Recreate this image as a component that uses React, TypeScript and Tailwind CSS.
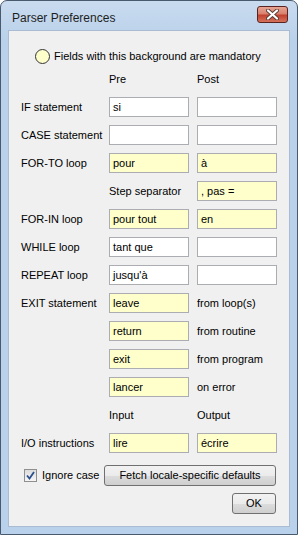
import React from "react";

const font = { fontFamily: '"Liberation Sans", Arial, sans-serif' };

type Cell =
  | { kind: "input"; value: string; mandatory?: boolean }
  | { kind: "text"; value: string }
  | { kind: "empty" };

type Row = { label: string; pre: Cell; post: Cell };

const rows: Row[] = [
  { label: "", pre: { kind: "text", value: "Pre" }, post: { kind: "text", value: "Post" } },
  { label: "IF statement", pre: { kind: "input", value: "si" }, post: { kind: "input", value: "" } },
  { label: "CASE statement", pre: { kind: "input", value: "" }, post: { kind: "input", value: "" } },
  { label: "FOR-TO loop", pre: { kind: "input", value: "pour", mandatory: true }, post: { kind: "input", value: "à", mandatory: true } },
  { label: "", pre: { kind: "text", value: "Step separator" }, post: { kind: "input", value: ", pas =", mandatory: true } },
  { label: "FOR-IN loop", pre: { kind: "input", value: "pour tout", mandatory: true }, post: { kind: "input", value: "en", mandatory: true } },
  { label: "WHILE loop", pre: { kind: "input", value: "tant que" }, post: { kind: "input", value: "" } },
  { label: "REPEAT loop", pre: { kind: "input", value: "jusqu'à" }, post: { kind: "input", value: "" } },
  { label: "EXIT statement", pre: { kind: "input", value: "leave", mandatory: true }, post: { kind: "text", value: "from loop(s)" } },
  { label: "", pre: { kind: "input", value: "return", mandatory: true }, post: { kind: "text", value: "from routine" } },
  { label: "", pre: { kind: "input", value: "exit", mandatory: true }, post: { kind: "text", value: "from program" } },
  { label: "", pre: { kind: "input", value: "lancer", mandatory: true }, post: { kind: "text", value: "on error" } },
  { label: "", pre: { kind: "text", value: "Input" }, post: { kind: "text", value: "Output" } },
  { label: "I/O instructions", pre: { kind: "input", value: "lire", mandatory: true }, post: { kind: "input", value: "écrire", mandatory: true } },
];

function CellView({ cell }: { cell: Cell }) {
  if (cell.kind === "input") {
    return (
      <div
        className={`h-[20px] border border-[#abadb3] flex items-center px-[3px] text-black ${
          cell.mandatory ? "bg-[#ffffcc]" : "bg-white"
        }`}
      >
        {cell.value}
      </div>
    );
  }
  if (cell.kind === "text") {
    return <div className="h-[20px] flex items-center whitespace-nowrap text-black">{cell.value}</div>;
  }
  return <div className="h-[20px]" />;
}

function Button({ children, className }: { children: React.ReactNode; className?: string }) {
  return (
    <div
      className={`h-[21px] rounded-[3px] border border-[#707070] flex items-center justify-center text-black bg-[linear-gradient(#f2f2f2_0%,#ebebeb_50%,#dddddd_51%,#cfcfcf_100%)] ${className ?? ""}`}
    >
      {children}
    </div>
  );
}

export default function App() {
  return (
    <div className="w-[298px] h-[535px] bg-white" style={font}>
      <div className="w-full h-full rounded-t-[7px] border border-[#4a5a6e] bg-[linear-gradient(#c9dbef,#b9d1ea_40px)] flex flex-col px-[7px] pb-[7px]">
        {/* title bar */}
        <div className="h-[29px] flex items-center justify-between pl-[4px] pr-[2px]">
          <span className="text-[12px] text-[#1e1e1e] mt-[5px]">Parser Preferences</span>
          <div className="w-[31px] h-[17px] mt-[-3px] rounded-[3px] border border-[#5a2320] bg-[linear-gradient(#e8a493_0%,#d98270_45%,#c2412f_55%,#d4725c_100%)] flex items-center justify-center">
            <svg width="13" height="11" viewBox="0 0 13 11">
              <path d="M2 1.5 L11 9.5 M11 1.5 L2 9.5" stroke="#5a3a36" strokeWidth="4" strokeLinecap="round" />
              <path d="M2 1.5 L11 9.5 M11 1.5 L2 9.5" stroke="#ffffff" strokeWidth="2.2" strokeLinecap="round" />
            </svg>
          </div>
        </div>
        {/* client */}
        <div className="flex-1 bg-[#f0f0f0] border border-[#a9bcd1] text-[11px] flex flex-col">
          <div className="flex items-center gap-[4px] ml-[26px] mt-[17px] h-[16px]">
            <div className="w-[15px] h-[15px] rounded-full border border-[#333] bg-[#ffffcc]" />
            <span className="text-black">Fields with this background are mandatory</span>
          </div>
          <div className="grid grid-cols-[80px_80px_80px] gap-x-2 gap-y-2 ml-[12px] mt-[5px]">
            {rows.map((r, i) => (
              <React.Fragment key={i}>
                <div className="h-[20px] flex items-center whitespace-nowrap text-black">{r.label}</div>
                <CellView cell={r.pre} />
                <CellView cell={r.post} />
              </React.Fragment>
            ))}
          </div>
          <div className="flex items-center ml-[15px] mr-[13px] mt-[12px]">
            <div className="w-[13px] h-[13px] border border-[#8f8f8f] bg-[linear-gradient(#dcdcdc,#f6f6f6)] flex items-center justify-center">
              <svg width="9" height="9" viewBox="0 0 9 9">
                <path d="M1 4.5 L3.5 7.5 L8 1" stroke="#2a4f8f" strokeWidth="1.8" fill="none" />
              </svg>
            </div>
            <span className="ml-[5px] text-black">Ignore case</span>
            <Button className="ml-auto w-[172px]">Fetch locale-specific defaults</Button>
          </div>
          <div className="flex justify-end mr-[13px] mt-[7px]">
            <Button className="w-[44px]">OK</Button>
          </div>
        </div>
      </div>
    </div>
  );
}
